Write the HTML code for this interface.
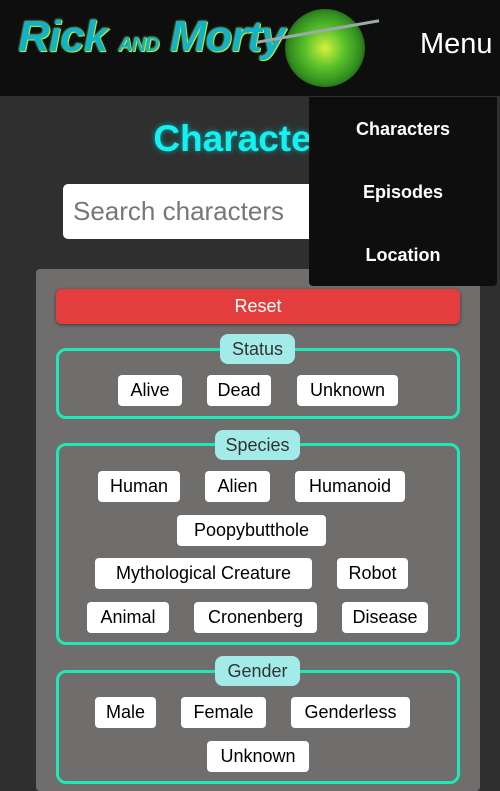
<!DOCTYPE html>
<html><head><style>
*{margin:0;padding:0;box-sizing:border-box}
body{width:500px;height:791px;background:#2f2f2f;position:relative;overflow:hidden;font-family:"Liberation Sans",sans-serif}
.a{position:absolute}
.hdr{left:0;top:0;width:500px;height:96px;background:#0e0e0e}
.b{position:absolute;background:#fff;border-radius:4px;color:#000;font-size:18px;text-align:center;line-height:31px;height:31px}
.box{position:absolute;border:3px solid #1de9b6;border-radius:10px}
.lg{position:absolute;background:#a3ebe9;border-radius:8px;color:#333;font-size:18px;text-align:center;line-height:30px;height:30px}
.m{position:absolute;color:#fff;font-size:18px;font-weight:bold;width:188px;text-align:center;left:309px}
</style></head><body>
<div class="a hdr"></div>
<div class="a" style="left:18px;top:12px;font-size:44px;font-weight:bold;font-style:italic;color:#12b3c9;text-shadow:0 0 2px #b6e83a,1px 1px 0 #b6e83a;letter-spacing:-1px">Rick <span style="font-size:20px">AND</span> Morty</div>
<div class="a" style="left:285px;top:9px;width:80px;height:78px;border-radius:50%;background:radial-gradient(circle,#d8f040 0%,#5bc22a 35%,#2f8a1e 65%,rgba(30,90,20,0.3) 85%,transparent 100%)"></div>
<div class="a" style="left:256px;top:30px;width:124px;height:3px;background:#9aa;transform:rotate(-10deg)"></div>
<div class="a" style="left:420px;top:28px;color:#fff;font-size:29px">Menu</div>
<div class="a" style="left:0;top:118px;width:500px;text-align:center;color:#18f0f0;font-size:37px;font-weight:bold;text-shadow:0 0 6px #0aa">Characters</div>
<div class="a" style="left:63px;top:184px;width:374px;height:55px;background:#fff;border-radius:5px;color:#777;font-size:26px;line-height:55px;padding-left:10px">Search characters</div>
<div class="a" style="left:36px;top:269px;width:444px;height:522px;background:#706d6d;border-radius:4px"></div>
<div class="a" style="left:56px;top:289px;width:404px;height:35px;background:#e33d3e;border-radius:5px;color:#fff;font-size:18px;text-align:center;line-height:35px;box-shadow:0 1px 3px rgba(0,0,0,.5)">Reset</div>
<div class="box" style="left:56px;top:348px;width:404px;height:71px"></div>
<div class="lg" style="left:220px;top:334px;width:75px">Status</div>
<div class="b" style="left:118px;top:375px;width:64px">Alive</div>
<div class="b" style="left:207px;top:375px;width:64px">Dead</div>
<div class="b" style="left:297px;top:375px;width:101px">Unknown</div>
<div class="box" style="left:56px;top:443px;width:404px;height:202px"></div>
<div class="lg" style="left:215px;top:430px;width:85px">Species</div>
<div class="b" style="left:98px;top:471px;width:82px">Human</div>
<div class="b" style="left:205px;top:471px;width:65px">Alien</div>
<div class="b" style="left:295px;top:471px;width:110px">Humanoid</div>
<div class="b" style="left:177px;top:515px;width:149px">Poopybutthole</div>
<div class="b" style="left:95px;top:558px;width:217px">Mythological Creature</div>
<div class="b" style="left:337px;top:558px;width:71px">Robot</div>
<div class="b" style="left:87px;top:602px;width:82px">Animal</div>
<div class="b" style="left:194px;top:602px;width:123px">Cronenberg</div>
<div class="b" style="left:342px;top:602px;width:86px">Disease</div>
<div class="box" style="left:56px;top:670px;width:404px;height:114px"></div>
<div class="lg" style="left:215px;top:656px;width:85px">Gender</div>
<div class="b" style="left:95px;top:697px;width:61px">Male</div>
<div class="b" style="left:181px;top:697px;width:85px">Female</div>
<div class="b" style="left:291px;top:697px;width:119px">Genderless</div>
<div class="b" style="left:207px;top:741px;width:102px">Unknown</div>
<div class="a" style="left:309px;top:97px;width:188px;height:189px;background:#0e0e0e;border-radius:0 0 4px 4px"></div>
<div class="m" style="top:119px">Characters</div>
<div class="m" style="top:182px">Episodes</div>
<div class="m" style="top:245px">Location</div>
</body></html>
